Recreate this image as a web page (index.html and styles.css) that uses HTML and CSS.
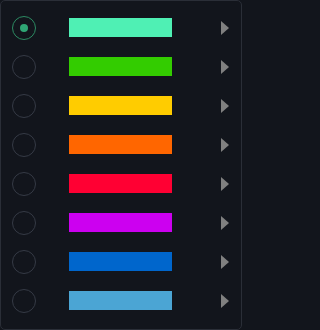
FILE: index.html
```html
<!DOCTYPE html>
<html>
<head>
<meta charset="utf-8">
<link rel="stylesheet" href="styles.css">
</head>
<body>
<div class="panel">
  <div class="row"><span class="radio checked"><span class="dot"></span></span><span class="swatch" style="background:#4ff0b4"></span><span class="arrow"></span></div>
  <div class="row"><span class="radio"></span><span class="swatch" style="background:#33cc00"></span><span class="arrow"></span></div>
  <div class="row"><span class="radio"></span><span class="swatch" style="background:#ffcc00"></span><span class="arrow"></span></div>
  <div class="row"><span class="radio"></span><span class="swatch" style="background:#ff6600"></span><span class="arrow"></span></div>
  <div class="row"><span class="radio"></span><span class="swatch" style="background:#ff0033"></span><span class="arrow"></span></div>
  <div class="row"><span class="radio"></span><span class="swatch" style="background:#cc00f0"></span><span class="arrow"></span></div>
  <div class="row"><span class="radio"></span><span class="swatch" style="background:#0066cc"></span><span class="arrow"></span></div>
  <div class="row"><span class="radio"></span><span class="swatch" style="background:#4ba5d4"></span><span class="arrow"></span></div>
</div>
</body>
</html>
```
FILE: styles.css
```css
html, body {
  margin: 0;
  padding: 0;
  background: #12151c;
}
.panel {
  width: 242px;
  height: 330px;
  box-sizing: border-box;
  border: 1px solid #2a2e37;
  border-radius: 5px;
  background: #12151c;
  padding: 7px 0 9px 11px;
  display: flex;
  flex-direction: column;
}
.row {
  height: 39px;
  display: flex;
  align-items: center;
}
.radio {
  width: 24px;
  height: 24px;
  box-sizing: border-box;
  border: 1.5px solid #353a45;
  border-radius: 50%;
  display: flex;
  align-items: center;
  justify-content: center;
  flex: none;
}
.radio.checked {
  border-color: #2c8a62;
}
.dot {
  width: 8px;
  height: 8px;
  border-radius: 50%;
  background: #2fa675;
}
.swatch {
  width: 103px;
  height: 19px;
  margin-left: 33px;
  flex: none;
}
.arrow {
  width: 0;
  height: 0;
  margin-left: 49px;
  margin-top: 1px;
  border-top: 7.5px solid transparent;
  border-bottom: 7.5px solid transparent;
  border-left: 8px solid #808080;
  flex: none;
}
```
